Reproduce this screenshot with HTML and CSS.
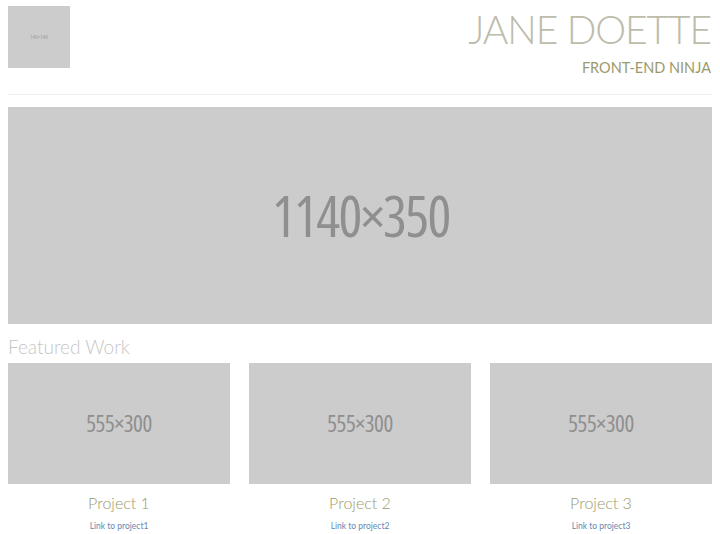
FILE: index.html
```html
<!DOCTYPE html>
<html>
<head>
<meta charset="utf-8">
<link rel="stylesheet" href="styles.css">
</head>
<body>
<div class="page">
  <header class="header">
    <div class="logo"><span class="ph">140×140</span></div>
    <div class="brand">
      <h1 class="name">JANE DOETTE</h1>
      <p class="role">FRONT-END NINJA</p>
    </div>
  </header>
  <hr class="rule">
  <div class="hero"><span class="ph">1140×350</span></div>
  <h2 class="section-title">Featured Work</h2>
  <div class="grid">
    <div class="card">
      <div class="thumb"><span class="ph">555×300</span></div>
      <h3 class="proj">Project 1</h3>
      <a class="link" href="#">Link to project1</a>
    </div>
    <div class="card">
      <div class="thumb"><span class="ph">555×300</span></div>
      <h3 class="proj">Project 2</h3>
      <a class="link" href="#">Link to project2</a>
    </div>
    <div class="card">
      <div class="thumb"><span class="ph">555×300</span></div>
      <h3 class="proj">Project 3</h3>
      <a class="link" href="#">Link to project3</a>
    </div>
  </div>
</div>
</body>
</html>
```

FILE: styles.css
```css
* { box-sizing: border-box; }
html, body { margin: 0; padding: 0; background: #fff; }
body { font-family: Lato, "Open Sans", sans-serif; }
.page { padding: 0 8px; }
.header { display: flex; justify-content: space-between; align-items: flex-start; height: 87px; }
.logo {
  margin-top: 6px; width: 62px; height: 62px; background: #cccccc;
  display: flex; align-items: center; justify-content: center;
}
.ph {
  display: inline-block; font-family: "Open Sans", sans-serif; font-weight: 500;
  font-stretch: 75%; color: #8f8f8f; line-height: 1;
}
.logo .ph { font-size: 6px; color: #a0a0a0; font-weight: normal; }
.brand { text-align: right; padding-right: 1px; }
.name {
  margin: 6px 0 0; font-weight: 300; font-size: 39px; line-height: 46px;
  letter-spacing: -1.1px; color: #bdbcaa;
}
.role { margin: 7px 0 0; font-size: 14.5px; line-height: 18px; color: #9b9a6d; }
.rule { margin: 7px 0 12px; border: 0; border-top: 1px solid #eeeeee; }
.hero {
  height: 217px; background: #cccccc; display: flex; align-items: center; justify-content: center;
}
.hero .ph { font-size: 56px; letter-spacing: -1.6px; margin-right: -1.6px; margin-top: -1px; }
.section-title { margin: 11px 0 4px; font-weight: 300; font-size: 19px; line-height: 24px; color: #c6c6c6; }
.grid { display: grid; grid-template-columns: repeat(3, 1fr); column-gap: 19px; }
.card { text-align: center; }
.thumb { height: 121px; background: #cccccc; display: flex; align-items: center; justify-content: center; }
.thumb .ph { font-size: 23px; letter-spacing: -0.4px; margin-top: 0; }
.proj { margin: 9px 0 0; font-weight: 300; font-size: 16px; line-height: 20px; color: #9a9a6b; }
.link { display: block; margin-top: 7px; font-size: 8.5px; line-height: 12px; color: #6588b3; text-decoration: none; }
```
